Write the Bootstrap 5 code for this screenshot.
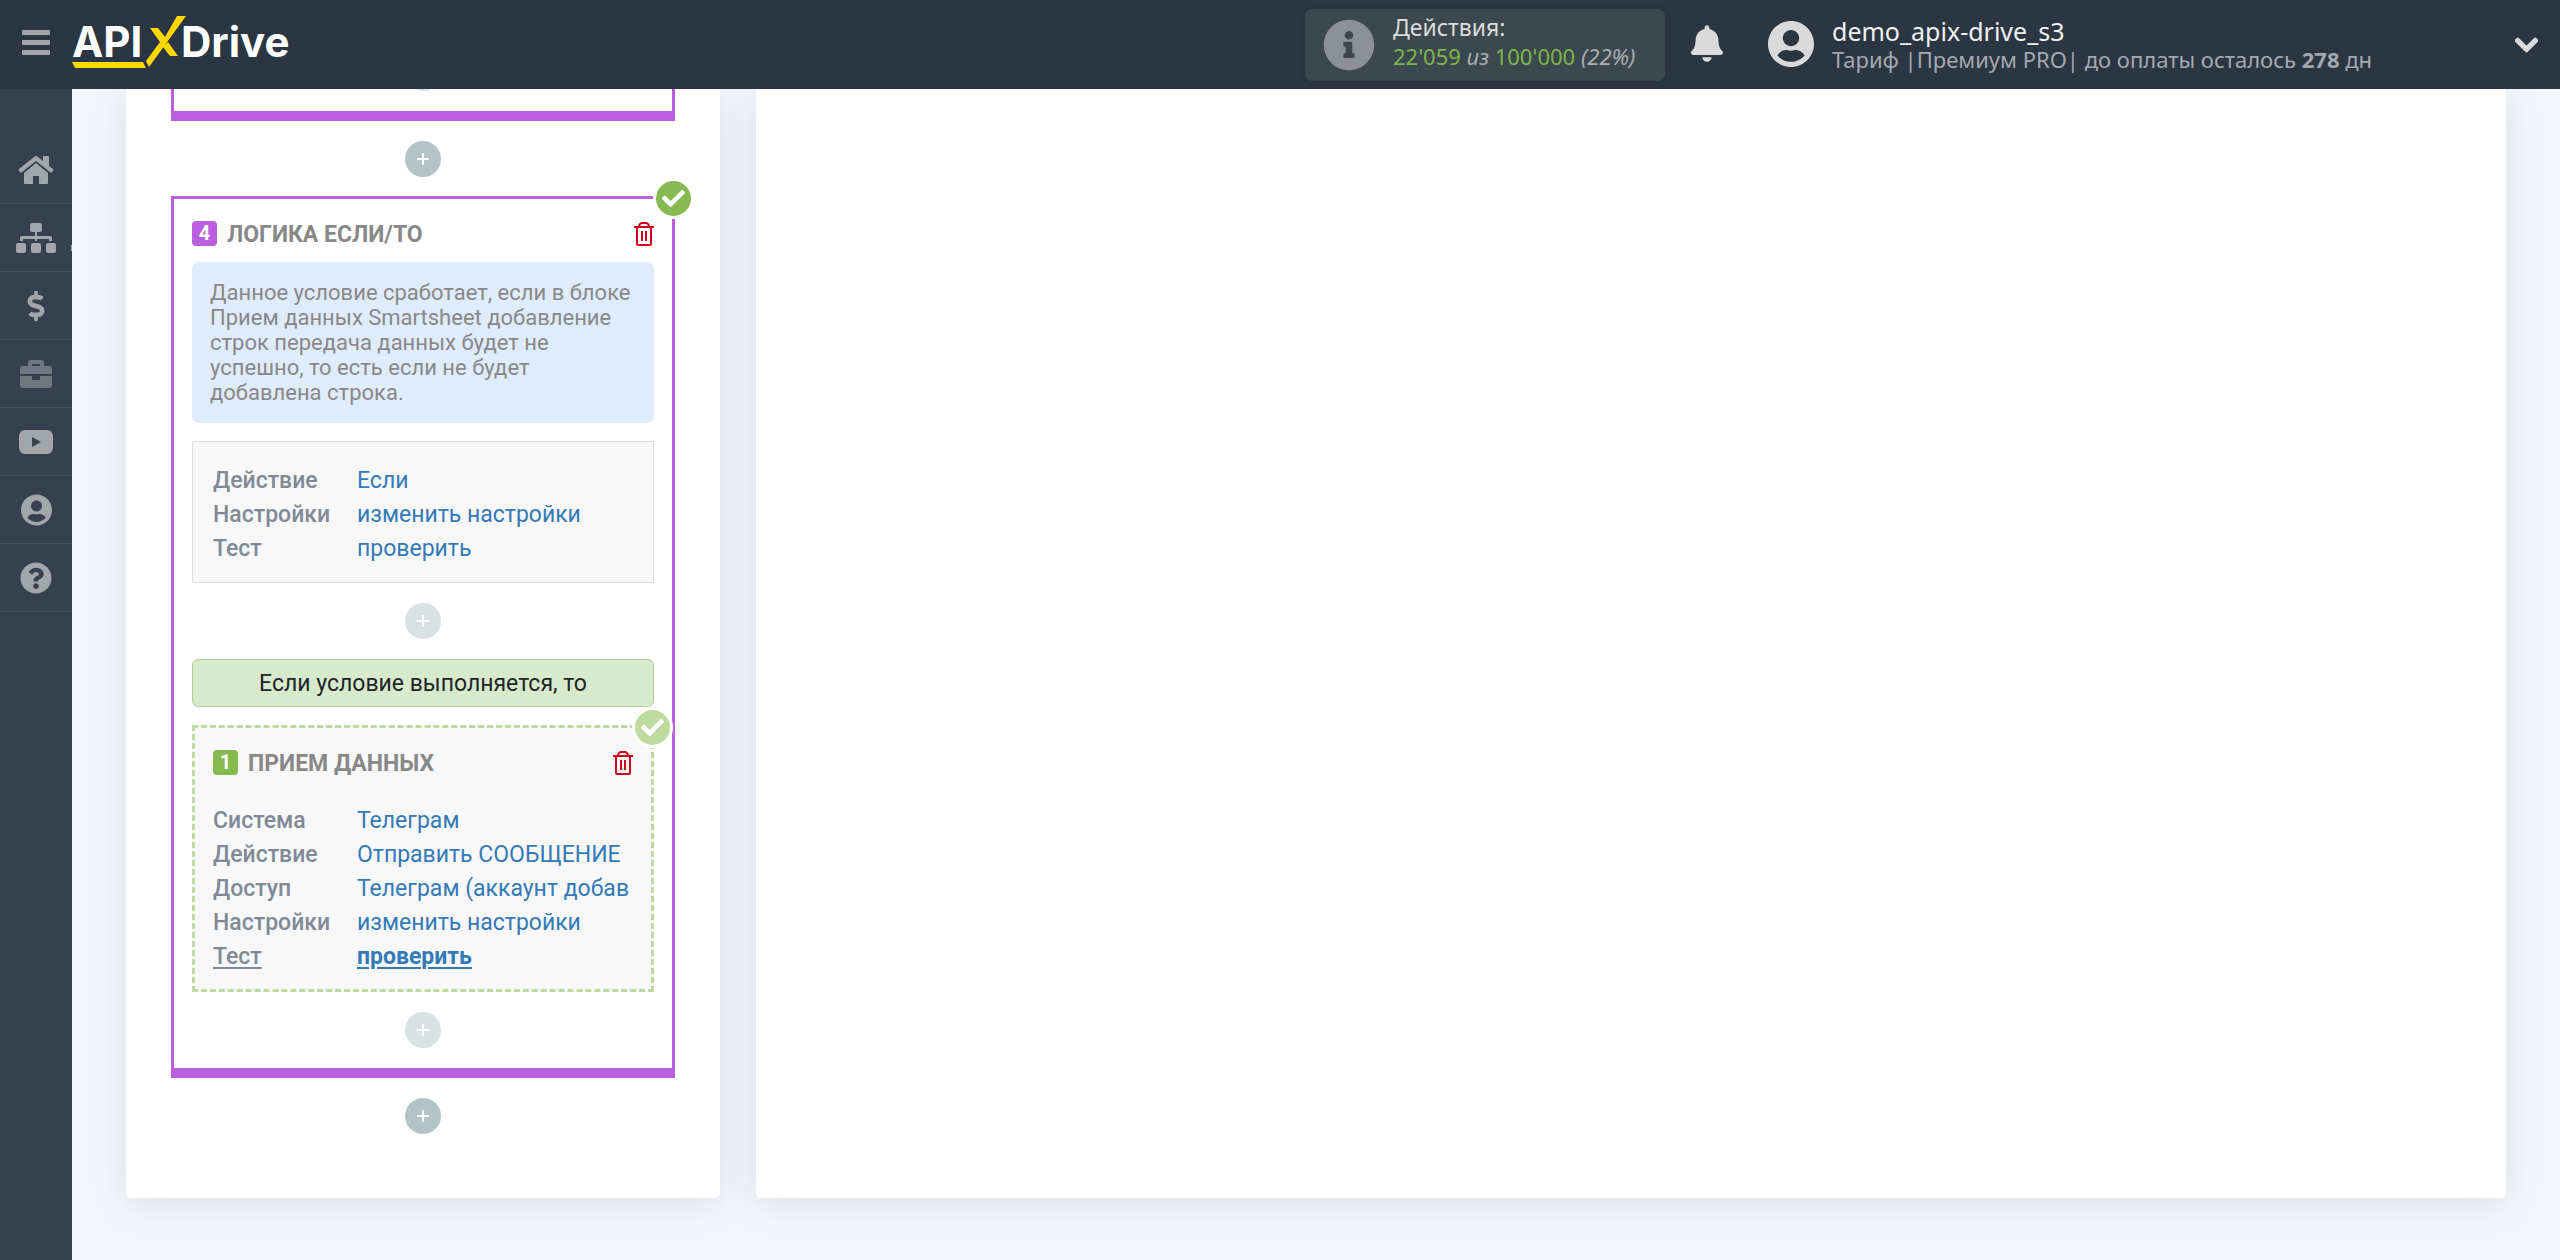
<!DOCTYPE html>
<html lang="ru">
<head>
<meta charset="utf-8">
<meta name="viewport" content="width=device-width, initial-scale=1">
<title>ApiX-Drive</title>
<link href="https://cdn.jsdelivr.net/npm/bootstrap@5.3.0/dist/css/bootstrap.min.css" rel="stylesheet">
<style>
body{background:#f3f6fb;font-family:Roboto,"Liberation Sans",sans-serif;font-size:23px;color:#212529}
.shell{height:100vh}
.topbar{height:89px;background:#2b3643;font-family:"Noto Sans",sans-serif;z-index:5;padding:0 22px}
.topbar svg,.side svg{fill:currentColor;display:block}
.burger{color:#a1a6aa}
.burger,.bell,.more{background:none;border:0;padding:0}
.burger svg{margin-bottom:4px}
.logo{margin-left:22px;padding-bottom:2px}
.logo text{font-family:Inter,sans-serif;font-weight:700;font-size:42px;fill:#fff}
.quota{width:360px;height:72px;background:#3b4850;border-radius:7px;padding-left:18px;gap:18px;box-shadow:0 0 6px rgba(0,0,0,.15);line-height:29px;color:#dcdcdc}
.quota .ico{color:#8b9196}
.quota-text{padding-bottom:6px}
.quota-sum{font-size:22px;color:#a9adb3}
.quota-sum b{font-weight:400;color:#7fb648}
.bell,.more,.who{color:#dadada}
.bell{margin:0 45px 0 26px}
.bell svg,.who svg{margin-bottom:2px}
.who{gap:18px;line-height:28px}
.who-text{width:683px}
.who-name{font-size:25px;color:#f1f1f1}
.who-plan{color:#a4a9b0;font-size:22px}
.side{width:72px;background:#364150;padding-top:47px}
.side a{height:68px;color:#a1a6aa;border-bottom:1px solid #4a5564}
.side a.dim{color:#6e7680}
.caret{position:absolute;right:0;bottom:20px;width:1px;height:6px;background:#a1a6aa}
.stage{padding:0 54px 62px;gap:36px}
.pane{background:#fff;border-radius:0 0 5px 5px;box-shadow:0 5px 36px rgba(0,0,0,.1)}
.pane-flow{width:594px;padding:0 45px 64px}
.logic{border:3px solid #b95fe0;border-bottom-width:10px;padding:22px 18px 0}
.logic-prev{border-top:0;padding-top:0;overflow:hidden;height:32px}
.logic-prev .plus{margin-top:-34px}
.logic-prev + .plus{margin-bottom:19px}
.plus{width:36px;height:36px;border-radius:50%;border:0;padding:0;background:#b4c3c4;margin:20px auto;display:flex;align-items:center;justify-content:center}
.plus svg{stroke:#fff;stroke-width:2}
.plus.pale{background:#d9e2e2}
.done{position:absolute;right:-22px;top:-21px;width:41px;height:41px;border:3px solid #fff;border-radius:50%;background:#86b94f}
.done.pale{background:#bedb9f}
.done svg{fill:#fff}
.step-head{height:25px;gap:10px}
.num{width:25px;height:25px;border-radius:4px;background:#b95fe0;color:#fff;font-size:20px;font-weight:700;line-height:25px;text-align:center}
.num.green{background:#86b94f}
.step-title{font-size:23px;line-height:25px;font-weight:700;color:#888;margin:0;padding-top:2px;text-transform:uppercase}
.trash{background:none;border:0;padding:0;line-height:0}
.trash svg{fill:none;stroke:#d0021b;stroke-width:2}
.hint{background:#dfecfe;border-radius:7px;padding:18px;margin:16px 0 18px;font-size:22px;line-height:25px;color:#888}
.facts{border:1px solid #ddd;background:#f8f8f8;padding:22px 20px 16px;line-height:34px}
.facts dl,.inner dl{margin:0;display:grid;grid-template-columns:144px 1fr}
.facts dt,.inner dt{font-weight:500;color:#808a96}
.facts dd,.inner dd{margin:0;overflow:hidden;white-space:nowrap}
dd a{color:#337ab7;text-decoration:none}
.cond{height:48px;line-height:47px;border:1px solid #b0d09b;border-radius:6px;background:#d8eacc;text-align:center}
.inner{border:3px dashed #bedb9f;background:#f8f8f8;margin-top:18px;padding:22px 18px 15px;line-height:34px}
.inner dl{margin-top:29px}
.now,.now a{text-decoration:underline;text-decoration-thickness:2px;text-underline-offset:3px}
</style>
</head>
<body>
<div class="shell d-flex flex-column overflow-hidden">
<header class="topbar d-flex align-items-center flex-shrink-0 position-relative">
  <button class="burger" aria-label="Меню"><svg width="28" height="25"><rect y="0" width="28" height="5" rx="1"/><rect y="10" width="28" height="5" rx="1"/><rect y="20" width="28" height="5" rx="1"/></svg></button>
  <a class="logo" href="#" aria-label="APIXDrive"><svg width="224" height="56" viewBox="0 0 224 56"><text x="0" y="41">API</text><text x="109" y="41">Drive</text><path fill="#ffd800" d="M0 46H71L74 52H3ZM105 0H114L77 51 74 45 88 26 78 12H86L93 21ZM96 26 106 40H98L91 31Z"/></svg></a>
  <div class="quota d-flex align-items-center ms-auto">
    <svg class="ico" width="52" height="52" viewBox="0 0 512 512"><path d="M256 8C119.043 8 8 119.083 8 256c0 136.997 111.043 248 248 248s248-111.003 248-248C504 119.083 392.957 8 256 8zm0 110c23.196 0 42 18.804 42 42s-18.804 42-42 42-42-18.804-42-42 18.804-42 42-42zm56 254c0 6.627-5.373 12-12 12h-88c-6.627 0-12-5.373-12-12v-24c0-6.627 5.373-12 12-12h12v-64h-12c-6.627 0-12-5.373-12-12v-24c0-6.627 5.373-12 12-12h64c6.627 0 12 5.373 12 12v100h12c6.627 0 12 5.373 12 12v24z"/></svg>
    <div class="quota-text"><div>Действия:</div><div class="quota-sum"><b>22'059</b> <i>из</i> <b>100'000</b> <i>(22%)</i></div></div>
  </div>
  <button class="bell" aria-label="Уведомления"><svg width="32" height="37" viewBox="0 0 448 512"><path d="M224 512c35.32 0 63.97-28.65 63.97-64H160.03c0 35.35 28.65 64 63.97 64zm215.39-149.71c-19.32-20.76-55.47-51.99-55.47-154.29 0-77.7-54.48-139.9-127.94-155.16V32c0-17.67-14.32-32-31.98-32s-31.98 14.33-31.98 32v20.84C118.56 68.1 64.08 130.3 64.08 208c0 102.3-36.15 133.53-55.47 154.29-6 6.45-8.66 14.16-8.61 21.71.11 16.4 12.98 32 32.1 32h383.8c19.12 0 32-15.6 32.1-32 .05-7.55-2.61-15.27-8.61-21.71z"/></svg></button>
  <div class="who d-flex align-items-center">
    <svg width="46" height="48" viewBox="0 0 496 512"><path d="M248 8C111 8 0 119 0 256s111 248 248 248 248-111 248-248S385 8 248 8zm0 96c48.6 0 88 39.4 88 88s-39.4 88-88 88-88-39.4-88-88 39.4-88 88-88zm0 344c-58.7 0-111.3-26.6-146.5-68.2 18.8-35.4 55.6-59.8 98.5-59.8 2.4 0 4.8.4 7.1 1.1 13 4.2 26.6 6.9 40.9 6.9 14.3 0 28-2.7 40.9-6.9 2.3-.7 4.7-1.1 7.1-1.1 42.9 0 79.7 24.4 98.5 59.8C359.3 421.4 306.7 448 248 448z"/></svg>
    <div class="who-text"><div class="who-name">demo_apix-drive_s3</div><div class="who-plan">Тариф |Премиум PRO| до оплаты осталось <b>278</b> дн</div></div>
  </div>
  <button class="more" aria-label="Ещё"><svg width="23" height="26" viewBox="0 0 448 512"><path d="M207.029 381.476L12.686 187.132c-9.373-9.373-9.373-24.569 0-33.941l22.667-22.667c9.357-9.357 24.522-9.375 33.901-.04L224 284.505l154.745-154.021c9.379-9.335 24.544-9.317 33.901.04l22.667 22.667c9.373 9.373 9.373 24.569 0 33.941L240.971 381.476c-9.373 9.372-24.569 9.372-33.942 0z" stroke="currentColor" stroke-width="24"/></svg></button>
</header>
<div class="d-flex flex-grow-1">
  <nav class="side flex-shrink-0">
    <a class="d-flex align-items-center justify-content-center" href="#" aria-label="Главная"><svg width="36" height="28" viewBox="0 0 36 28"><path d="M16 1Q18-1 20 1L25 5V1Q25 0 26 0H30Q31 0 31 1V10L35 13Q36 14 35 15L34 16Q33 17 32 16L18 5 4 16Q3 17 2 16L1 15Q0 14 1 13ZM18 7 30 17V27Q30 28 29 28H21V20H15V28H7Q6 28 6 27V17Z"/></svg></a>
    <a class="d-flex align-items-center justify-content-center position-relative" href="#" aria-label="Связи"><svg width="40" height="30" viewBox="0 0 40 30"><rect x="14" width="12" height="9" rx="2"/><path d="M19 9H21V13H34Q36 13 36 15V18H33V16H21V18H19V16H7V18H4V15Q4 13 6 13H19Z"/><rect y="20" width="10" height="10" rx="2"/><rect x="15" y="20" width="10" height="10" rx="2"/><rect x="30" y="20" width="10" height="10" rx="2"/></svg><span class="caret"></span></a>
    <a class="d-flex align-items-center justify-content-center" href="#" aria-label="Тарифы"><svg width="18" height="30" viewBox="0 0 288 512"><path d="M209.2 233.4l-108-31.6C88.7 198.2 80 186.5 80 173.5c0-16.3 13.2-29.5 29.5-29.5h66.3c12.2 0 24.2 3.7 34.2 10.5 6.1 4.1 14.3 3.1 19.5-2l34.8-34c7.1-6.9 6.1-18.4-1.8-24.5C238 74.8 207.4 64.1 176 64V16c0-8.8-7.2-16-16-16h-32c-8.8 0-16 7.2-16 16v48h-2.5C45.8 64-5.4 118.7.5 183.6c4.2 46.1 39.4 83.6 83.8 96.6l102.5 30c12.5 3.7 21.2 15.3 21.2 28.3 0 16.3-13.2 29.5-29.5 29.5h-66.3C100 368 88 364.3 78 357.5c-6.1-4.1-14.3-3.1-19.5 2l-34.8 34c-7.1 6.9-6.1 18.4 1.8 24.5 24.5 19.2 55.1 29.9 86.5 30v48c0 8.8 7.2 16 16 16h32c8.8 0 16-7.2 16-16v-48.2c46.6-.9 90.3-28.6 105.7-72.7 21.5-61.6-14.6-124.8-72.5-141.7z"/></svg></a>
    <a class="dim d-flex align-items-center justify-content-center" href="#" aria-label="Портфель"><svg width="32" height="28" viewBox="0 0 32 28"><path fill-rule="evenodd" d="M3 6H8V3Q8 0 11 0H20Q24 0 24 3V6H29Q32 6 32 9V14H0V9Q0 6 3 6ZM12 4V6H20V4ZM0 16H12V20H20V16H32V25Q32 28 29 28H3Q0 28 0 25Z"/></svg></a>
    <a class="d-flex align-items-center justify-content-center" href="#" aria-label="Видео"><svg width="34" height="24" viewBox="0 0 34 24"><path fill-rule="evenodd" d="M6 0Q17-1 28 0 33 0 34 6V18Q33 24 28 24H6Q1 24 0 18V6Q1 0 6 0ZM13 7V17L22 12Z"/></svg></a>
    <a class="d-flex align-items-center justify-content-center" href="#" aria-label="Профиль"><svg width="31" height="32" viewBox="0 0 496 512"><path d="M248 8C111 8 0 119 0 256s111 248 248 248 248-111 248-248S385 8 248 8zm0 96c48.6 0 88 39.4 88 88s-39.4 88-88 88-88-39.4-88-88 39.4-88 88-88zm0 344c-58.7 0-111.3-26.6-146.5-68.2 18.8-35.4 55.6-59.8 98.5-59.8 2.4 0 4.8.4 7.1 1.1 13 4.2 26.6 6.9 40.9 6.9 14.3 0 28-2.7 40.9-6.9 2.3-.7 4.7-1.1 7.1-1.1 42.9 0 79.7 24.4 98.5 59.8C359.3 421.4 306.7 448 248 448z"/></svg></a>
    <a class="d-flex align-items-center justify-content-center" href="#" aria-label="Справка"><svg width="32" height="32" viewBox="0 0 512 512"><path d="M504 256c0 136.997-111.043 248-248 248S8 392.997 8 256C8 119.083 119.043 8 256 8s248 111.083 248 248zM262.655 90c-54.497 0-89.255 22.957-116.549 63.758-3.536 5.286-2.353 12.415 2.715 16.258l34.699 26.31c5.205 3.947 12.621 3.008 16.665-2.122 17.864-22.658 30.113-35.797 57.303-35.797 20.429 0 45.698 13.148 45.698 32.958 0 14.976-12.363 22.667-32.534 33.976C247.128 238.528 216 254.941 216 296v4c0 6.627 5.373 12 12 12h56c6.627 0 12-5.373 12-12v-1.333c0-28.462 83.186-29.647 83.186-106.667 0-58.002-60.165-102-116.531-102zM256 338c-25.365 0-46 20.635-46 46 0 25.364 20.635 46 46 46s46-20.636 46-46c0-25.365-20.635-46-46-46z"/></svg></a>
  </nav>
  <main class="stage d-flex flex-grow-1 align-items-start">
    <section class="pane pane-flow flex-shrink-0">
      <div class="logic logic-prev"><button class="plus pale" aria-label="Добавить"></button></div>
      <button class="plus" aria-label="Добавить"><svg width="12" height="12"><path d="M6 0V12M0 6H12"/></svg></button>
      <article class="logic position-relative">
        <span class="done d-flex align-items-center justify-content-center"><svg width="23" height="23" viewBox="0 0 512 512"><path d="M173.898 439.404l-166.4-166.4c-9.997-9.997-9.997-26.206 0-36.204l36.203-36.204c9.997-9.998 26.207-9.998 36.204 0L192 312.69 432.095 72.596c9.997-9.997 26.207-9.997 36.204 0l36.203 36.204c9.997 9.997 9.997 26.206 0 36.204l-294.4 294.401c-9.998 9.997-26.207 9.997-36.204-.001z"/></svg></span>
        <div class="step-head d-flex align-items-center"><span class="num">4</span><h2 class="step-title">Логика если/то</h2><button class="trash ms-auto" aria-label="Удалить"><svg width="20" height="24" viewBox="0 0 20 24"><path d="M0 5H20M5 5V4Q6 1 8 1H12Q14 1 15 4V5M3 5V22Q3 23 4 23H16Q17 23 17 22V5M8 9V19M12 9V19"/></svg></button></div>
        <p class="hint">Данное условие сработает, если в блоке Прием данных Smartsheet добавление строк передача данных будет не успешно, то есть если не будет добавлена строка.</p>
        <div class="facts"><dl>
          <dt>Действие</dt><dd><a href="#">Если</a></dd>
          <dt>Настройки</dt><dd><a href="#">изменить настройки</a></dd>
          <dt>Тест</dt><dd><a href="#">проверить</a></dd>
        </dl></div>
        <button class="plus pale" aria-label="Добавить"><svg width="12" height="12"><path d="M6 0V12M0 6H12"/></svg></button>
        <div class="cond">Если условие выполняется, то</div>
        <div class="inner position-relative">
          <span class="done pale d-flex align-items-center justify-content-center"><svg width="23" height="23" viewBox="0 0 512 512"><path d="M173.898 439.404l-166.4-166.4c-9.997-9.997-9.997-26.206 0-36.204l36.203-36.204c9.997-9.998 26.207-9.998 36.204 0L192 312.69 432.095 72.596c9.997-9.997 26.207-9.997 36.204 0l36.203 36.204c9.997 9.997 9.997 26.206 0 36.204l-294.4 294.401c-9.998 9.997-26.207 9.997-36.204-.001z"/></svg></span>
          <div class="step-head d-flex align-items-center"><span class="num green">1</span><h2 class="step-title">Прием данных</h2><button class="trash ms-auto" aria-label="Удалить"><svg width="20" height="24" viewBox="0 0 20 24"><path d="M0 5H20M5 5V4Q6 1 8 1H12Q14 1 15 4V5M3 5V22Q3 23 4 23H16Q17 23 17 22V5M8 9V19M12 9V19"/></svg></button></div>
          <dl>
            <dt>Система</dt><dd><a href="#">Телеграм</a></dd>
            <dt>Действие</dt><dd><a href="#">Отправить СООБЩЕНИЕ</a></dd>
            <dt>Доступ</dt><dd><a href="#">Телеграм (аккаунт добав</a></dd>
            <dt>Настройки</dt><dd><a href="#">изменить настройки</a></dd>
            <dt class="now">Тест</dt><dd class="now fw-bold"><a href="#">проверить</a></dd>
          </dl>
        </div>
        <button class="plus pale" aria-label="Добавить"><svg width="12" height="12"><path d="M6 0V12M0 6H12"/></svg></button>
      </article>
      <button class="plus mb-0" aria-label="Добавить"><svg width="12" height="12"><path d="M6 0V12M0 6H12"/></svg></button>
    </section>
    <section class="pane flex-grow-1 align-self-stretch" aria-label="Рабочая область"></section>
  </main>
</div>
</div>
<script src="https://cdn.jsdelivr.net/npm/bootstrap@5.3.0/dist/js/bootstrap.bundle.min.js"></script>
</body>
</html>
